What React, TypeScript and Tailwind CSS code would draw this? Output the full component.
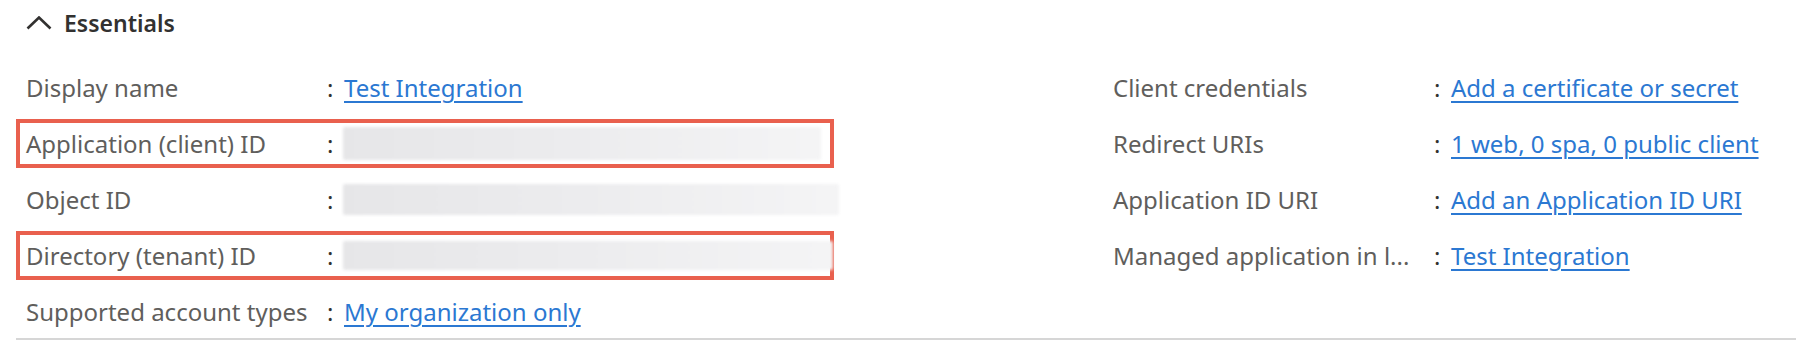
import React from 'react';

type Row = {
  label: string;
  value?: string;
  blur?: { w: number; h: number };
  boxed?: boolean;
};

const left: Row[] = [
  { label: 'Display name', value: 'Test Integration' },
  { label: 'Application (client) ID', blur: { w: 478, h: 33 }, boxed: true },
  { label: 'Object ID', blur: { w: 496, h: 31 } },
  { label: 'Directory (tenant) ID', blur: { w: 490, h: 29 }, boxed: true },
  { label: 'Supported account types', value: 'My organization only' },
];

const right: Row[] = [
  { label: 'Client credentials', value: 'Add a certificate or secret' },
  { label: 'Redirect URIs', value: '1 web, 0 spa, 0 public client' },
  { label: 'Application ID URI', value: 'Add an Application ID URI' },
  { label: 'Managed application in l...', value: 'Test Integration' },
];

function Field({ row, labelW }: { row: Row; labelW: string }) {
  return (
    <div
      className={`flex items-center h-[49px] w-[818px] pl-[6px] pr-[4px] border-[4px] ${
        row.boxed ? 'border-[#e9604e]' : 'border-transparent'
      }`}
    >
      <span className={`${labelW} shrink-0 text-[#605e5c] whitespace-nowrap`}>{row.label}</span>
      <span className="w-[14px] shrink-0 text-[#323130]">:</span>
      {row.blur ? (
        // Значение замазано на скриншоте
        <span
          className="ml-[2px] block shrink-0 rounded-[2px] bg-gradient-to-r from-[#e6e6e8] via-[#ececee] to-[#f4f4f5] blur-[1.5px]"
          style={{ width: row.blur.w, height: row.blur.h }}
        />
      ) : (
        <a href="#" className="ml-[3px] text-[#2b78d2] underline underline-offset-[4px] decoration-[1.5px] whitespace-nowrap">
          {row.value}
        </a>
      )}
    </div>
  );
}

export default function App() {
  return (
    <div className="w-[1812px] h-[342px] bg-white overflow-hidden text-[24px] font-['Noto_Sans',sans-serif]">
      <div className="px-4">
        {/* Header */}
        <div className="h-[46px] flex items-center">
          <svg width="26" height="14" viewBox="0 0 26 14" className="ml-[10px] text-[#323130]">
            <polyline points="1.5,12.5 13,1.5 24.5,12.5" fill="none" stroke="currentColor" strokeWidth="2.6" />
          </svg>
          <span className="ml-[12px] font-semibold text-[23px] text-[#323130]">Essentials</span>
        </div>

        <div className="mt-[17px] grid grid-cols-[1087px_1fr]">
          <div className="flex flex-col gap-[7px]">
            {left.map((r) => (
              <Field key={r.label} row={r} labelW="w-[301px]" />
            ))}
          </div>
          <div className="flex flex-col gap-[7px]">
            {right.map((r) => (
              <Field key={r.label} row={r} labelW="w-[321px]" />
            ))}
          </div>
        </div>
        <div className="mt-[2px] h-[2px] bg-[#d6d6d6]" />
      </div>
    </div>
  );
}
